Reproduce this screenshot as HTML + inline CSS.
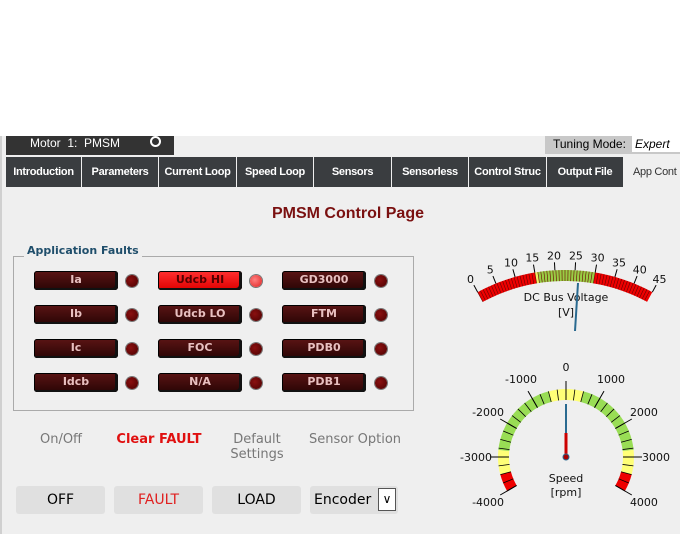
<!DOCTYPE html><html><head><style>
body{margin:0;width:695px;height:548px;background:#fff;position:relative;overflow:hidden;font-family:"Liberation Sans",sans-serif}
.a{position:absolute}
#panel{left:0;top:136px;width:680px;height:398px;background:#efefef;border-left:2px solid #d0d0d0;box-sizing:border-box}
.tab{position:absolute;top:157px;height:30px;background:#3a3d40;color:#fff;font-size:11px;font-weight:bold;line-height:30px;text-align:center;letter-spacing:-0.3px}
.fb{position:absolute;width:84px;height:19px;border-radius:3px;background:linear-gradient(#5a1414,#2a0505);box-shadow:inset -3px -2px 0 #111,inset 0 0 0 1px #000;color:#e8c0c0;font:bold 11px "DejaVu Sans",sans-serif;text-align:center;line-height:18px}
.led{position:absolute;width:12px;height:12px;border-radius:50%;background:radial-gradient(circle at 40% 40%,#8a1010,#4a0000);box-shadow:0 0 0 1px #777}
.lb{position:absolute;font-size:13px;color:#777;text-align:center;width:100px;font-family:"DejaVu Sans",sans-serif}
.bt{position:absolute;top:486px;height:28px;width:89px;background:#e0e0e0;border-radius:3px;font-size:14px;text-align:center;line-height:28px;font-family:"DejaVu Sans",sans-serif}
</style></head><body>
<div id="panel" class="a"></div>
<div class="a" style="left:6px;top:136px;width:168px;height:19px;background:#333;color:#fff;font-size:12px;line-height:13px;padding-left:24px;box-sizing:border-box">Motor&nbsp; 1:&nbsp; PMSM<span style="display:inline-block;width:7px;height:7px;border-radius:50%;background:#333;border:2px solid #fff;margin-left:30px;vertical-align:0"></span></div>
<div class="a" style="left:545px;top:136px;width:135px;height:18px;background:#c8c8c8;font-size:12px;line-height:16px;padding-left:8px;box-sizing:border-box">Tuning Mode:<span class="a" style="left:87px;top:0;width:46px;height:16px;background:#fff;font-style:italic;padding-left:3px">Expert</span></div>
<div class="tab" style="left:6px;width:75px">Introduction</div>
<div class="tab" style="left:82px;width:76px">Parameters</div>
<div class="tab" style="left:159px;width:77px">Current Loop</div>
<div class="tab" style="left:237px;width:76px">Speed Loop</div>
<div class="tab" style="left:314px;width:77px">Sensors</div>
<div class="tab" style="left:392px;width:76px">Sensorless</div>
<div class="tab" style="left:469px;width:77px">Control Struc</div>
<div class="tab" style="left:547px;width:76px">Output File</div>
<div class="tab" style="left:624px;width:56px;background:#efefef;color:#333;font-weight:normal;text-align:left;padding-left:9px;box-sizing:border-box;overflow:hidden;white-space:nowrap">App Cont</div>
<div class="a" style="left:200px;width:296px;top:205px;text-align:center;color:#7a1010;font-weight:bold;font-size:16px">PMSM Control Page</div>
<div class="a" style="left:13px;top:256px;width:399px;height:153px;border:1px solid #aaa"></div>
<div class="a" style="left:24px;top:244px;background:#efefef;padding:0 3px;color:#1f4e6b;font:bold 11px 'DejaVu Sans',sans-serif">Application Faults</div>
<div class="fb" style="left:34px;top:271px">Ia</div><div class="fb" style="left:158px;top:271px;background:linear-gradient(#ff3030,#e00000);color:#500">Udcb HI</div><div class="fb" style="left:282px;top:271px">GD3000</div>
<div class="fb" style="left:34px;top:305px">Ib</div><div class="fb" style="left:158px;top:305px">Udcb LO</div><div class="fb" style="left:282px;top:305px">FTM</div>
<div class="fb" style="left:34px;top:339px">Ic</div><div class="fb" style="left:158px;top:339px">FOC</div><div class="fb" style="left:282px;top:339px">PDB0</div>
<div class="fb" style="left:34px;top:373px">Idcb</div><div class="fb" style="left:158px;top:373px">N/A</div><div class="fb" style="left:282px;top:373px">PDB1</div>
<div class="led" style="left:126px;top:275px"></div><div class="led" style="left:250px;top:275px;background:radial-gradient(circle at 40% 40%,#ff8080,#e02020)"></div><div class="led" style="left:375px;top:275px"></div>
<div class="led" style="left:126px;top:309px"></div><div class="led" style="left:250px;top:309px"></div><div class="led" style="left:375px;top:309px"></div>
<div class="led" style="left:126px;top:343px"></div><div class="led" style="left:250px;top:343px"></div><div class="led" style="left:375px;top:343px"></div>
<div class="led" style="left:126px;top:377px"></div><div class="led" style="left:250px;top:377px"></div><div class="led" style="left:375px;top:377px"></div>
<div class="lb" style="left:11px;top:432px">On/Off</div>
<div class="lb" style="left:109px;top:432px;color:#e01010;font-weight:bold">Clear FAULT</div>
<div class="lb" style="left:207px;top:432px">Default<br>Settings</div>
<div class="lb" style="left:300px;top:432px;width:110px">Sensor Option</div>
<div class="bt" style="left:16px">OFF</div>
<div class="bt" style="left:114px;color:#e02020">FAULT</div>
<div class="bt" style="left:212px">LOAD</div>
<div class="bt" style="left:310px;width:88px;text-align:left;padding-left:4px;box-sizing:border-box">Encoder<span class="a" style="left:68px;top:2px;width:18px;height:23px;background:#fff;border:1px solid #555;box-sizing:border-box;line-height:20px;text-align:center;font-size:12px">&#8744;</span></div>
<svg class="a" style="left:0;top:0" width="695" height="548" id="g"></svg>
<script>
var s='',P=Math.PI;
function pt(cx,cy,r,a){return [cx+r*Math.sin(a),cy-r*Math.cos(a)];}
function seg(cx,cy,r1,r2,a1,a2,c){var p1=pt(cx,cy,r2,a1),p2=pt(cx,cy,r2,a2),p3=pt(cx,cy,r1,a2),p4=pt(cx,cy,r1,a1);
s+='<path d="M'+p1+' A'+r2+' '+r2+' 0 0 1 '+p2+' L'+p3+' A'+r1+' '+r1+' 0 0 0 '+p4+'Z" fill="'+c+'"/>';}
function ln(cx,cy,r1,r2,a,c,w){var p=pt(cx,cy,r1,a),q=pt(cx,cy,r2,a);s+='<line x1="'+p[0]+'" y1="'+p[1]+'" x2="'+q[0]+'" y2="'+q[1]+'" stroke="'+c+'" stroke-width="'+w+'"/>';}
function tx(x,y,t,z){s+='<text x="'+x+'" y="'+y+'" font-size="'+(z||11)+'" text-anchor="middle" font-family="DejaVu Sans,sans-serif" fill="#111">'+t+'</text>';}
var cx=565,cy=453,R=183,h=28.5*P/180;
function va(v){return -h+2*h*v/45;}
for(var v=0;v<45;v+=0.75){var c=(v<15||v>=29.5)?'#e00':'#9c4';if(v>=15&&v<15.75)c='#ee6';seg(cx,cy,R-11,R,va(v),va(v+0.75),c);ln(cx,cy,R-11,R,va(v),'#600',0.6);}
for(v=0;v<=45;v+=5){ln(cx,cy,R,R+8,va(v),'#000',1);var p=pt(cx,cy,R+15,va(v));tx(p[0],p[1]+4,v);}
tx(566,301,'DC Bus Voltage',11);tx(566,316,'[V]',11);
s+='<line x1="578" y1="283" x2="575" y2="331" stroke="#2a6a90" stroke-width="2"/>';
cx=566;cy=457;R=68;function sa(v){return v/3000*P/2;}
var segs=[[-4000,-3500,'#e00'],[-3500,-2800,'#ff7'],[-2800,-500,'#9d5'],[-500,500,'#ff7'],[500,2800,'#9d5'],[2800,3500,'#ff7'],[3500,4000,'#e00']];
segs.forEach(function(q){seg(cx,cy,R-11,R,sa(q[0]),sa(q[1]),q[2]);});
for(v=-4000;v<=4000;v+=250){ln(cx,cy,R-11,R,sa(v),'#000',0.8);}
for(v=-4000;v<=4000;v+=1000){ln(cx,cy,R-11,R+8,sa(v),'#000',1);var p=pt(cx,cy,R+22,sa(v));tx(p[0],p[1]+4,v);}
tx(566,482,'Speed',11);tx(566,496,'[rpm]',11);
s+='<line x1="566" y1="404" x2="566" y2="433" stroke="#2a6a90" stroke-width="2"/><line x1="566" y1="433" x2="566" y2="457" stroke="#c00" stroke-width="3"/><circle cx="566" cy="457" r="3" fill="#a00" stroke="#2a6a90"/>';
document.getElementById('g').innerHTML=s;
</script>
</body></html>
